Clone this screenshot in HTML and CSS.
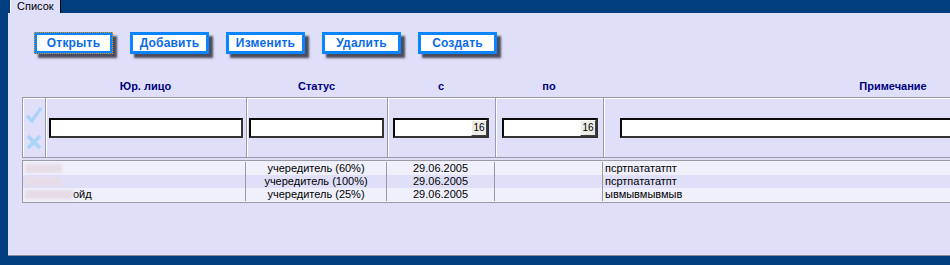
FILE: index.html
```html
<!DOCTYPE html>
<html lang="ru">

<head>
    <meta charset="UTF-8">
    <title>Список</title>
    <link rel="stylesheet" href="styles.css">
</head>

<body>
    <div class="tabs">
        <div class="tab">Список</div>
    </div>
    <div class="panel">
        <div class="toolbar">
            <button class="btn focus">Открыть</button>
            <button class="btn">Добавить</button>
            <button class="btn">Изменить</button>
            <button class="btn">Удалить</button>
            <button class="btn">Создать</button>
        </div>

        <div class="head">
            <div></div>
            <div>Юр. лицо</div>
            <div>Статус</div>
            <div>с</div>
            <div>по</div>
            <div>Примечание</div>
        </div>

        <div class="filter">
            <div class="icons">
                <svg width="18" height="18" viewBox="0 0 18 18">
                    <path d="M2 10 L7 15 L16 2" fill="none" stroke="#a9d3f7" stroke-width="3.2" />
                </svg>
                <svg width="16" height="16" viewBox="0 0 16 16">
                    <path d="M2 2 L14 14 M14 2 L2 14" fill="none" stroke="#a9d3f7" stroke-width="3.6" />
                </svg>
            </div>
            <div class="c-name"><div class="field"></div></div>
            <div class="c-status"><div class="field"></div></div>
            <div class="c-from"><div class="field date"><span class="cal">16</span></div></div>
            <div class="c-to"><div class="field date"><span class="cal">16</span></div></div>
            <div class="c-note"><div class="field"></div></div>
        </div>

        <div class="rows">
            <div class="row">
                <div class="name"><span class="hidden" style="width: 37px;"></span></div>
                <div class="mid">учередитель (60%)</div>
                <div class="mid">29.06.2005</div>
                <div class="mid"></div>
                <div>пcртпатататпт</div>
            </div>
            <div class="row alt">
                <div class="name"><span class="hidden" style="width: 37px;"></span></div>
                <div class="mid">учередитель (100%)</div>
                <div class="mid">29.06.2005</div>
                <div class="mid"></div>
                <div>пcртпатататпт</div>
            </div>
            <div class="row">
                <div class="name"><span class="hidden" style="width: 48px;"></span>ойд</div>
                <div class="mid">учередитель (25%)</div>
                <div class="mid">29.06.2005</div>
                <div class="mid"></div>
                <div>ывмывмывмыв</div>
            </div>
        </div>
    </div>
</body>

</html>
```

FILE: styles.css
```css
body {
    margin: 0;
    background-color: #003e80;
    font-family: "Liberation Sans", Arial, sans-serif;
    font-size: 11px;
    overflow: hidden;
    height: 265px;
}

.tabs {
    height: 13px;
    padding-left: 10px;
    display: flex;
}

.tab {
    width: 51px;
    height: 13px;
    background-color: #dfdff9;
    border-left: 1px solid #ffffff;
    border-right: 1px solid #000000;
    box-sizing: border-box;
    padding-left: 6px;
    line-height: 12px;
    color: #000000;
}

.panel {
    margin-left: 8px;
    height: 243px;
    background-color: #dfdff9;
    border-bottom: 1px solid #8a8a99;
    box-sizing: border-box;
    overflow: hidden;
}

/* кнопки */
.toolbar {
    display: flex;
    gap: 17px;
    padding: 19px 0 0 26px;
}

.btn {
    width: 79px;
    height: 22px;
    padding: 0;
    border: 3px solid #0a84ff;
    background-color: #ffffff;
    color: #0a6be8;
    font-family: "Liberation Sans", Arial, sans-serif;
    font-size: 12px;
    font-weight: bold;
    letter-spacing: 0.2px;
    box-shadow: 4px 4px 2px #4c4c5c;
}

.btn.focus {
    outline: 1px dotted #ff8a00;
    outline-offset: -1px;
}

/* таблица */
.head,
.filter {
    display: grid;
    grid-template-columns: 23px 201px 141px 108px 108px 580px;
    margin-left: 14px;
}

.head {
    margin-top: 24px;
    height: 17px;
    line-height: 17px;
    color: #00007f;
    font-weight: bold;
    text-align: center;
}

.filter {
    margin-top: 2px;
    height: 61px;
    box-sizing: border-box;
    border-top: 1px solid #9a9aa6;
    border-bottom: 1px solid #9a9aa6;
    border-left: 1px solid #9a9aa6;
}

.filter > div {
    display: flex;
    align-items: center;
    border-right: 1px solid #9a9aa6;
    box-shadow: inset 1px 1px 0 #ffffff;
}

.icons {
    flex-direction: column;
    justify-content: center;
    gap: 10px;
}

.field {
    height: 20px;
    background-color: #ffffff;
    border: 2px solid #0a0a0a;
    border-right-color: #333333;
    border-bottom-color: #333333;
    box-sizing: border-box;
}

.c-name { padding-left: 3px; }
.c-name .field { width: 194px; }
.c-status { padding-left: 2px; }
.c-status .field { width: 135px; }
.c-from { padding-left: 5px; }
.c-to { padding-left: 6px; }
.date { width: 96px; display: flex; justify-content: flex-end; }
.c-note { padding-left: 16px; }
.c-note .field { width: 560px; }

.cal {
    width: 16px;
    height: 16px;
    background-color: #ecebe6;
    border-top: 1px solid #ffffff;
    border-left: 1px solid #ffffff;
    border-right: 1px solid #404040;
    border-bottom: 1px solid #404040;
    box-sizing: border-box;
    font-size: 10px;
    line-height: 14px;
    text-align: center;
    color: #000000;
}

.rows {
    margin: 2px 0 0 14px;
    width: 1162px;
    border-top: 1px solid #9a9aa6;
    border-bottom: 1px solid #9a9aa6;
    border-left: 1px solid #9a9aa6;
    padding: 1px 0 1px;
    background-color: #f0f0fc;
}

.row {
    display: grid;
    grid-template-columns: 223px 141px 108px 108px 580px;
    height: 13px;
    line-height: 13px;
    background-color: #f0f0fc;
    color: #000000;
}

.row.alt {
    background-color: #dfdff9;
}

.row > div {
    border-right: 1px solid #9a9aa6;
    padding-left: 2px;
    white-space: nowrap;
    overflow: hidden;
}

.row > .mid {
    text-align: center;
    padding-left: 0;
}

.name {
    display: flex;
    align-items: center;
}

.hidden {
    display: inline-block;
    height: 9px;
    background-color: #e6dce6;
    filter: blur(1.5px);
}
```
